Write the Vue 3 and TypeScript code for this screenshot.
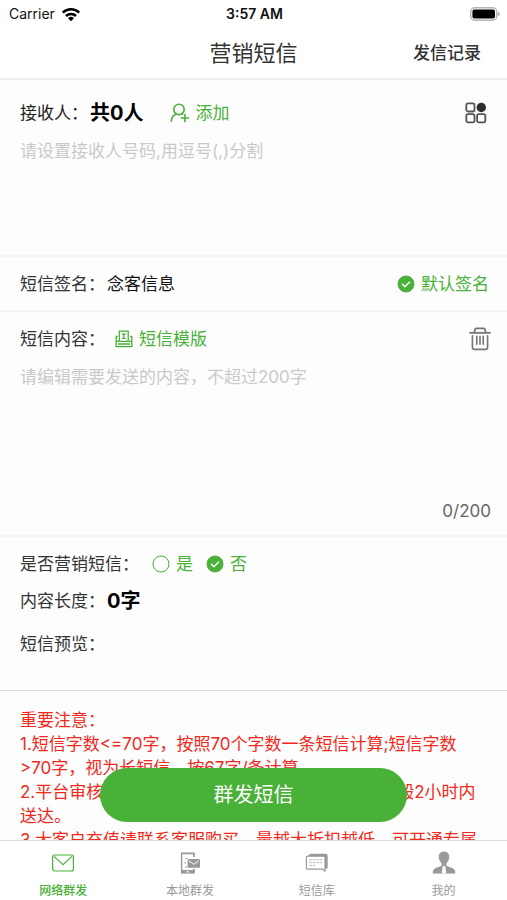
<script setup lang="ts">
import { computed, ref } from 'vue'

interface Tab {
  id: string
  label: string
}

const MAX_LENGTH = 200

const recipients = ref('')
const useDefaultSign = ref(true)
const content = ref('')
const marketing = ref<'yes' | 'no'>('no')
const activeTab = ref('network')

const recipientCount = computed(
  () => recipients.value.split(',').filter((n) => n.trim() !== '').length,
)

const tabs: Tab[] = [
  { id: 'network', label: '网络群发' },
  { id: 'local', label: '本地群发' },
  { id: 'library', label: '短信库' },
  { id: 'mine', label: '我的' },
]

const notices: string[] = [
  '重要注意：',
  '1.短信字数<=70字，按照70个字数一条短信计算;短信字数\n>70字，视为长短信，按67字/条计算',
  '2.平台审核时间为早上09点到晚上10点，提交后一般2小时内\n送达。',
  '3.大客户充值请联系客服购买，量越大折扣越低，可开通专属',
]
</script>

<template>
  <div class="app">
    <div class="status">
      <div class="carrier">
        <span>Carrier</span>
        <svg width="20" height="15" viewBox="0 0 20 15" aria-hidden="true">
          <g fill="none" stroke="#000" stroke-width="2.6">
            <path d="M1.8 5.6a11.8 11.8 0 0 1 16.4 0" />
            <path d="M5 9a7.2 7.2 0 0 1 10 0" />
          </g>
          <path d="M10 14.2l-3-3a4.3 4.3 0 0 1 6 0z" />
        </svg>
      </div>
      <span class="clock">3:57 AM</span>
      <div class="battery">
        <svg width="30" height="14" viewBox="0 0 30 14" aria-hidden="true">
          <rect x="0.7" y="0.7" width="26" height="12.6" rx="4" fill="#fff" stroke="#b5b5b5" stroke-width="1.4" />
          <rect x="2.4" y="2.4" width="22.6" height="9.2" rx="2" />
          <path d="M27.8 4.8q2 .6 2 2.200t-2 2.200z" fill="#aaa" />
        </svg>
      </div>
    </div>

    <header class="nav">
      <h1>营销短信</h1>
      <a class="records" href="#records">发信记录</a>
    </header>

    <main class="form">
      <section class="panel recipients">
        <div class="row">
          <label for="recipients">接收人：</label>
          <strong class="count">共{{ recipientCount }}人</strong>
          <button class="link add" type="button">
            <svg width="20" height="20" viewBox="0 0 20 20" fill="none" stroke="currentColor" stroke-width="1.6" aria-hidden="true">
              <circle cx="9" cy="6.4" r="5.2" />
              <path d="M1.2 18.800c.2-4.200 2-6.500 4.800-7.800M11.600 11l1.200.6M10.600 15h8.600M14.900 10.800v8.400" />
            </svg>
            添加
          </button>
          <button class="icon-button" type="button" aria-label="分组">
            <svg width="22" height="22" viewBox="0 0 22 22" fill="none" stroke="#555" stroke-width="1.8" aria-hidden="true">
              <rect x="1.3" y="1.3" width="8.2" height="8.2" rx="1.8" />
              <rect x="1.3" y="12.1" width="8.2" height="8.2" rx="1.8" />
              <rect x="12.1" y="12.1" width="8.2" height="8.2" rx="1.8" />
              <circle cx="16.3" cy="5.5" r="4.7" fill="#2d2d2d" stroke="none" />
            </svg>
          </button>
        </div>
        <textarea id="recipients" v-model="recipients" placeholder="请设置接收人号码,用逗号(,)分割"></textarea>
      </section>

      <section class="panel sign">
        <div class="row">
          <span>短信签名：</span>
          <span class="sign-name">念客信息</span>
          <label class="choice end">
            <input v-model="useDefaultSign" type="checkbox" />
            <svg class="mark" viewBox="0 0 18 18" aria-hidden="true">
              <circle class="ring" cx="9" cy="9" r="8" />
              <path class="tick" d="M5 8.8l2.8 2.9 5.2-5" />
            </svg>
            默认签名
          </label>
        </div>
      </section>

      <section class="panel content">
        <div class="row">
          <label for="content">短信内容：</label>
          <button class="link template" type="button">
            <svg width="18" height="18" viewBox="0 0 18 18" fill="none" stroke="currentColor" stroke-width="1.3" aria-hidden="true">
              <path d="M4.400 11V1.200h8.800V11M6.800 4.200h4M8.800 4.200v3.400M6.800 8.400h4" />
              <path d="M2.800 6.500H1.200v10.200h15.600V6.500h-1.600M1.400 11.400h15.200M3 14h12" />
            </svg>
            短信模版
          </button>
          <button class="icon-button" type="button" aria-label="清空" @click="content = ''">
            <svg width="22" height="24" viewBox="0 0 22 24" fill="none" stroke="#777" stroke-width="1.8" stroke-linecap="round" aria-hidden="true">
              <path d="M1 5.800h20M5.400 5.400l.6-3q.2-1 1.200-1h7.600q1 0 1.200 1l.6 3" />
              <path d="M3.400 8.800v11.400q0 2.200 2.200 2.200h10.800q2.200 0 2.200-2.200V8.800M7.800 9.400v7.800M11 9.400v7.800M14.200 9.400v7.800" stroke-width="1.600" />
            </svg>
          </button>
        </div>
        <textarea id="content" v-model="content" :maxlength="MAX_LENGTH" placeholder="请编辑需要发送的内容，不超过200字"></textarea>
        <p class="counter">{{ content.length }}/{{ MAX_LENGTH }}</p>
      </section>

      <section class="panel summary">
        <div class="row options" role="radiogroup" aria-label="是否营销短信">
          <span>是否营销短信：</span>
          <label class="choice">
            <input v-model="marketing" type="radio" name="marketing" value="yes" />
            <svg class="mark" viewBox="0 0 18 18" aria-hidden="true">
              <circle class="ring" cx="9" cy="9" r="8" />
              <path class="tick" d="M5 8.8l2.8 2.9 5.2-5" />
            </svg>
            是
          </label>
          <label class="choice">
            <input v-model="marketing" type="radio" name="marketing" value="no" />
            <svg class="mark" viewBox="0 0 18 18" aria-hidden="true">
              <circle class="ring" cx="9" cy="9" r="8" />
              <path class="tick" d="M5 8.8l2.8 2.9 5.2-5" />
            </svg>
            否
          </label>
        </div>
        <div class="row">
          <span>内容长度：</span>
          <strong class="count">{{ content.length }}字</strong>
        </div>
        <div class="row preview">
          <span>短信预览：</span>
          <span>{{ content }}</span>
        </div>
      </section>

      <section class="notice">
        <p v-for="line in notices" :key="line">{{ line }}</p>
      </section>
    </main>

    <footer class="bottom">
      <button class="send" type="button">群发短信</button>
      <nav class="tabs">
        <button
          v-for="tab in tabs"
          :key="tab.id"
          class="tab"
          :class="{ active: tab.id === activeTab }"
          type="button"
          @click="activeTab = tab.id"
        >
          <svg v-if="tab.id === 'network'" width="24" height="26" viewBox="0 0 24 26" fill="none" stroke="currentColor" stroke-width="1.2" aria-hidden="true">
            <rect x="1.6" y="5" width="20.8" height="16" rx="2" />
            <path d="M3 6.400l9 8.200 9-8.200" />
          </svg>
          <svg v-else-if="tab.id === 'local'" width="24" height="26" viewBox="0 0 24 26" fill="none" stroke="currentColor" aria-hidden="true">
            <path d="M3.600 3v20" stroke-width="1.400" />
            <path d="M3 3.400h13.400M16 3v4M16 19v4" stroke-width="1.800" />
            <path d="M3 21.800h13.600" stroke-width="3.600" />
            <path d="M8.600 21.800h2.400" stroke="#fff" stroke-width="1.200" />
            <rect x="9.600" y="9" width="12.400" height="8.800" rx="1" fill="currentColor" stroke="none" />
            <path d="M11 10.800l4.800 3.600 4.800-3.600" stroke="#fff" stroke-width="1" />
            <path d="M7.400 8.600h2M6.400 13h1.600M7.400 17h2" stroke-width="1" />
          </svg>
          <svg v-else-if="tab.id === 'library'" width="24" height="26" viewBox="0 0 24 26" fill="none" stroke="currentColor" aria-hidden="true">
            <path d="M3.400 5.800Q4 3.800 6 3.800h14.500q2.200 0 2.200 2.200v11.200q0 1.600-2.400 1.800z" fill="currentColor" stroke="none" />
            <path d="M3.200 6.200h15q1.800 0 1.800 1.800v13l-2.600-1.800H3.200q-1.800 0-1.800-1.800V8q0-1.800 1.800-1.800z" fill="#fff" stroke-width="1.200" />
            <path d="M4.200 9.800h13M4.200 12.600h13M4.200 15.400h6" stroke="#bbb" stroke-width="1" stroke-dasharray="3 .6" />
          </svg>
          <svg v-else width="24" height="26" viewBox="0 0 24 26" fill="currentColor" aria-hidden="true">
            <path d="M12 1.400c3.200 0 5.200 2.100 5.200 5.200 0 3-1.200 5.500-2.800 6.800v2c1 1.700 7.800 1.700 8.800 5.800v2.400H.8v-2.400c1-4.100 7.800-4.100 8.800-5.800v-2C8 12.100 6.800 9.600 6.800 6.600c0-3.100 2-5.200 5.200-5.200z" />
            <path d="M12 15.600l2 2.200-.6 1.200 1 3.200-2.400 2-2.400-2 1-3.200-.6-1.200z" fill="#fff" />
          </svg>
          <span>{{ tab.label }}</span>
        </button>
      </nav>
    </footer>
  </div>
</template>

<style>
body {
  background: #fdfdfd;
}
</style>

<style scoped>
.app {
  display: flex;
  flex-direction: column;
  height: 100vh;
  overflow: hidden;
  background: #fdfdfd;
  color: #333;
  font-family: Inter, "Noto Sans CJK SC", sans-serif;
  font-size: 17px;
  line-height: 24px;
}

h1,
p {
  margin: 0;
}

button {
  padding: 0;
  border: 0;
  background: none;
  color: inherit;
  font: inherit;
  cursor: pointer;
}

svg {
  flex: none;
}

.status,
.nav {
  display: grid;
  grid-template-columns: 1fr auto 1fr;
  align-items: center;
  background: #fff;
}

.status {
  height: 28px;
  padding: 0 7px 0 9px;
  color: #111;
  font-size: 14px;
}

.carrier {
  display: flex;
  align-items: center;
  gap: 6px;
}

.clock {
  font-weight: 600;
}

.battery {
  display: flex;
  justify-content: flex-end;
}

.nav {
  height: 50px;
  padding: 0 26px;
  border-bottom: 2px solid #eee;
}

.nav h1 {
  grid-column: 2;
  font-size: 22px;
  font-weight: 400;
}

.records {
  justify-self: end;
  color: #333;
  font-weight: 500;
  text-decoration: none;
}

.form {
  flex: 1;
  min-height: 0;
  overflow: hidden;
}

.panel {
  display: flex;
  flex-direction: column;
  padding: 0 18px 0 20px;
  border-bottom: 2px solid #f3f3f3;
}

.row {
  display: flex;
  align-items: center;
  min-height: 24px;
}

.count {
  margin-left: 2px;
  color: #000;
  font-size: 20px;
  font-weight: 700;
}

.link,
.choice {
  display: flex;
  align-items: center;
  gap: 6px;
  color: #49b138;
}

.add {
  margin-left: 26px;
}

.template {
  margin-left: 10px;
}

.icon-button {
  display: flex;
  margin-left: auto;
}

textarea {
  height: 96px;
  margin-top: 14px;
  padding: 0;
  border: 0;
  outline: 0;
  background: transparent;
  color: inherit;
  font: inherit;
  resize: none;
}

textarea::placeholder {
  color: #c9c9c9;
  opacity: 1;
}

.recipients {
  padding: 21px 20px 20px;
}

.recipients label {
  color: #222;
}

.sign {
  padding-top: 15px;
  padding-bottom: 14px;
}

.sign-name {
  margin-left: 2px;
  color: #111;
}

.end {
  margin-left: auto;
}

.content {
  padding-top: 15px;
  padding-right: 16px;
  padding-bottom: 12px;
}

.content textarea {
  height: 110px;
}

.counter {
  margin-top: 24px;
  color: #666;
  text-align: right;
}

.choice {
  position: relative;
  cursor: pointer;
}

.choice input {
  position: absolute;
  width: 18px;
  height: 18px;
  margin: 0;
  opacity: 0;
  cursor: pointer;
}

.mark {
  width: 18px;
  height: 18px;
  fill: none;
  stroke: currentColor;
}

.tick {
  stroke: none;
  stroke-width: 1.5;
}

input:checked + .mark .ring {
  fill: currentColor;
}

input:checked + .mark .tick {
  stroke: #fff;
}

input:focus-visible + .mark {
  outline: 2px solid #a5dc9b;
  border-radius: 50%;
}

.summary {
  gap: 13px;
  padding-top: 15px;
  padding-bottom: 34px;
  border-bottom: 1px solid #ddd;
}

.options .choice {
  margin-left: 13px;
}

.preview {
  margin-top: 6px;
}

.notice {
  padding: 17px 18px 24px 20px;
  color: #f1291b;
  white-space: pre-line;
}

.bottom {
  position: relative;
}

.send {
  position: absolute;
  right: 100px;
  bottom: 78px;
  left: 100px;
  height: 54px;
  border-radius: 27px;
  background: #4ab138;
  color: #fff;
  font-size: 20px;
}

.tabs {
  display: grid;
  grid-template-columns: repeat(4, 1fr);
  height: 59px;
  border-top: 1px solid #ddd;
  background: #fff;
}

.tab {
  display: flex;
  flex-direction: column;
  align-items: center;
  gap: 5px;
  padding-top: 9px;
  color: #999;
  font-size: 12px;
  line-height: 20px;
}

.active {
  color: #49b138;
  font-weight: 500;
}
</style>
